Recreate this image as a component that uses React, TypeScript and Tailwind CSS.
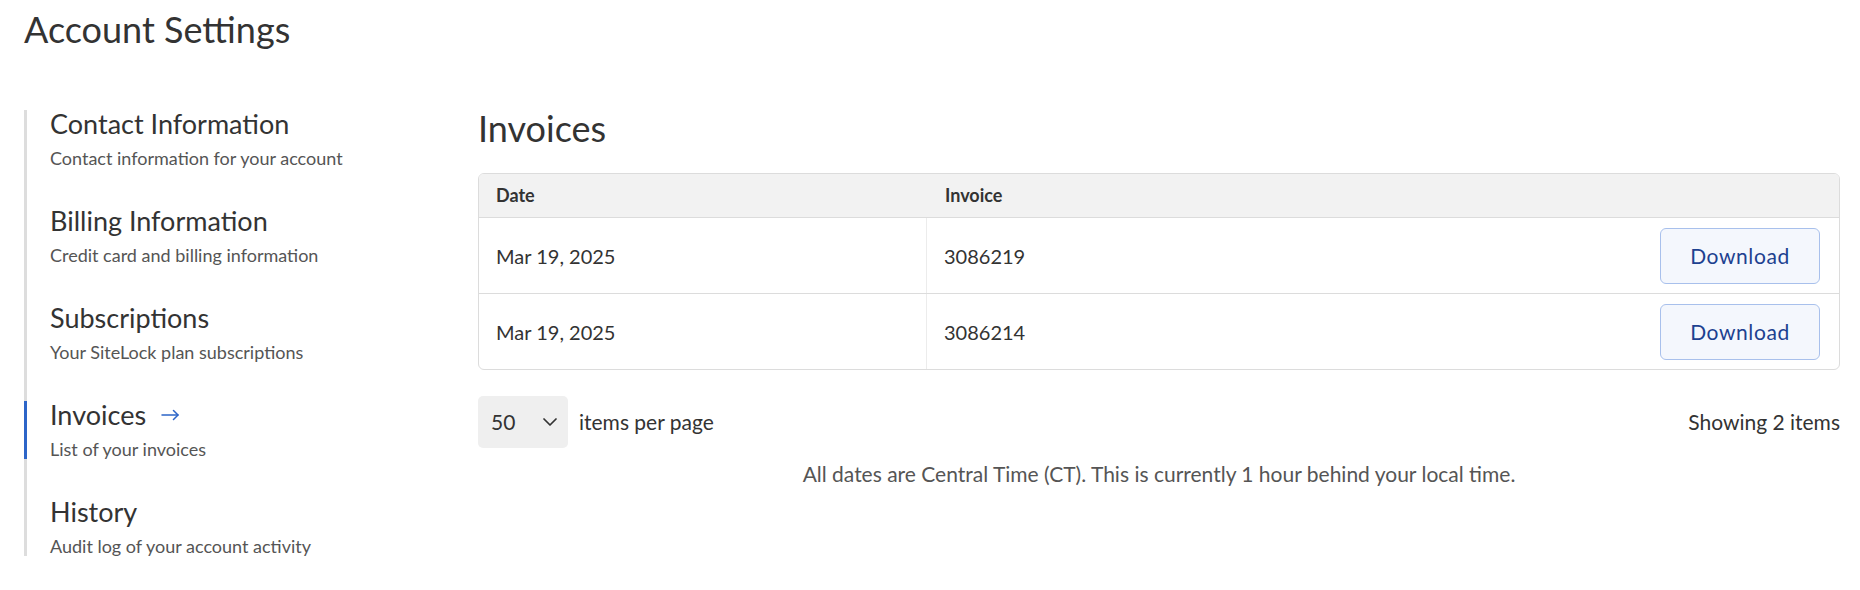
import { ChevronDown } from 'lucide-react';

const navItems = [
  { title: 'Contact Information', desc: 'Contact information for your account' },
  { title: 'Billing Information', desc: 'Credit card and billing information' },
  { title: 'Subscriptions', desc: 'Your SiteLock plan subscriptions' },
  { title: 'Invoices', desc: 'List of your invoices', active: true },
  { title: 'History', desc: 'Audit log of your account activity' },
];

const invoices = [
  { date: 'Mar 19, 2025', number: '3086219' },
  { date: 'Mar 19, 2025', number: '3086214' },
];

function ArrowIcon() {
  return (
    <svg width="18" height="18" viewBox="0 0 18 18" fill="none" stroke="#2d65c8" strokeWidth="1.5" strokeLinecap="round" strokeLinejoin="round">
      <path d="M1 9h16" />
      <path d="M12.5 4.5 17 9l-4.5 4.5" />
    </svg>
  );
}

export default function App() {
  return (
    <div className="min-h-[590px] bg-white pl-[24px] pr-[20px] pt-[9px] font-['Lato',sans-serif] text-[#333]">
      <h1 className="text-[36px] leading-[40px] font-normal">Account Settings</h1>

      <div className="mt-[61px] flex">
        {/* Side navigation */}
        <nav className="w-[454px] shrink-0">
          <ul className="flex flex-col gap-[39px] border-l-[3px] border-[#dddddd]">
            {navItems.map((item) => (
              <li
                key={item.title}
                className={
                  item.active
                    ? '-ml-[3px] border-l-[3px] border-[#2d65c8] pb-[1px] pl-[23px]'
                    : '-ml-[3px] border-l-[3px] border-transparent pb-[1px] pl-[23px]'
                }
              >
                <div className="flex items-center gap-[15px] text-[27px] leading-[28px]">
                  <span>{item.title}</span>
                  {item.active && <ArrowIcon />}
                </div>
                <p className="mt-[11px] text-[18px] leading-[18px] text-[#555]">{item.desc}</p>
              </li>
            ))}
          </ul>
        </nav>

        {/* Invoices */}
        <main className="min-w-0 flex-1">
          <h2 className="text-[36px] leading-[36px] font-normal">Invoices</h2>

          <div className="mt-[27px] overflow-hidden rounded-[6px] border border-[#dcdcdc]">
            <div className="flex h-[44px] items-center border-b border-[#dcdcdc] bg-[#f2f2f2] text-[18px] font-bold">
              <div className="w-[448px] pl-[17px]">Date</div>
              <div className="pl-[18px]">Invoice</div>
            </div>
            {invoices.map((inv, i) => (
              <div
                key={inv.number}
                className={
                  i === 0
                    ? 'flex h-[76px] border-b border-[#dcdcdc] text-[20px]'
                    : 'flex h-[75px] text-[20px]'
                }
              >
                <div className="flex w-[448px] items-center border-r border-[#ececec] pl-[17px]">{inv.date}</div>
                <div className="flex flex-1 items-center justify-between pl-[17px] pr-[19px]">
                  <span>{inv.number}</span>
                  <button className="h-[56px] w-[160px] rounded-[6px] border border-[#a8c0ec] bg-[#f4f7fd] text-[21px] tracking-[0.6px] text-[#1d4190]">
                    Download
                  </button>
                </div>
              </div>
            ))}
          </div>

          <div className="mt-[26px] flex items-center justify-between">
            <div className="flex items-center">
              <div className="flex h-[52px] w-[90px] items-center justify-between rounded-[5px] bg-[#efefef] pl-[13px] pr-[6px] text-[21px]">
                <span>50</span>
                <ChevronDown size={24} strokeWidth={1.75} className="text-[#333]" />
              </div>
              <span className="ml-[11px] text-[21px]">items per page</span>
            </div>
            <span className="text-[21px]">Showing 2 items</span>
          </div>

          <p className="mt-[14px] text-center text-[21px] leading-[24px] text-[#555]">
            All dates are Central Time (CT). This is currently 1 hour behind your local time.
          </p>
        </main>
      </div>
    </div>
  );
}
